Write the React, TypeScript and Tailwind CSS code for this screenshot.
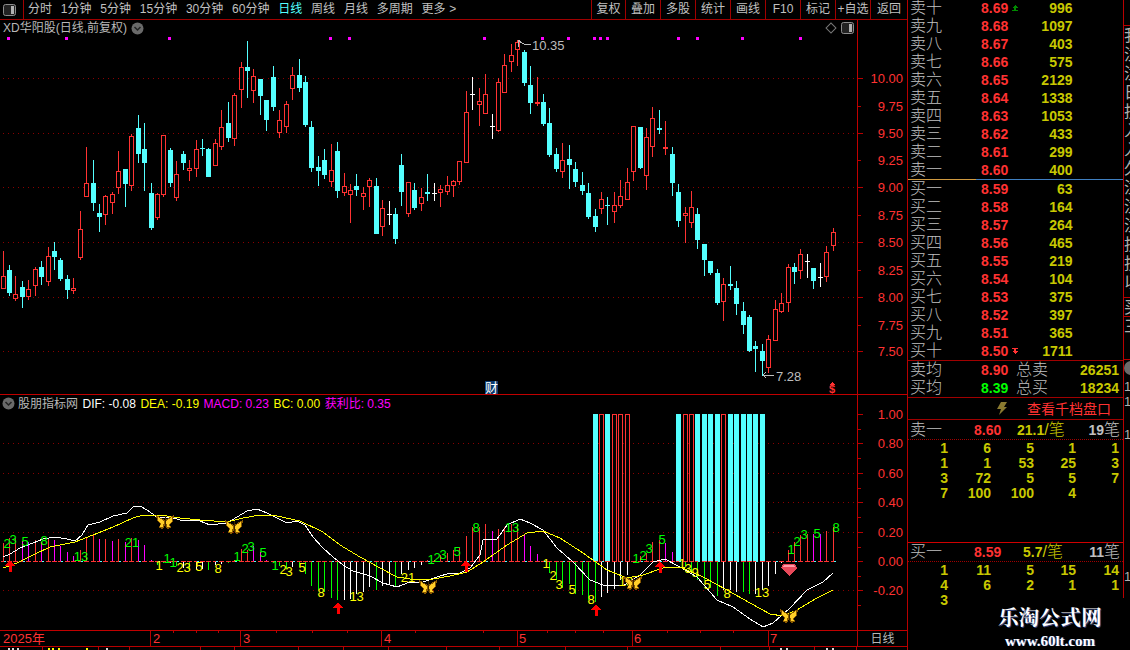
import React from "react";

type Kind = "r" | "c" | "w";
type Candle = [number, number, number, number, Kind];

const RED = "#ff3232";
const CYAN = "#54ffff";
const GRID = "#8a0000";
const LINE = "#b80000";

// high, body top, body bottom, low (screen y), colour
const candles: Candle[] = [
  [251, 276, 289, 289, "r"], [265, 270, 293, 296, "c"], [276, 294, 299, 301, "r"], [281, 287, 297, 308, "c"],
  [280, 289, 297, 300, "r"], [267, 269, 286, 296, "r"], [261, 267, 277, 285, "c"], [247, 256, 282, 286, "r"],
  [242, 251, 257, 270, "c"], [258, 260, 279, 281, "c"], [275, 279, 290, 299, "c"], [278, 288, 291, 294, "r"],
  [211, 229, 258, 260, "r"], [147, 183, 197, 197, "r"], [160, 183, 203, 211, "c"], [204, 213, 217, 232, "c"],
  [195, 196, 215, 225, "r"], [192, 194, 203, 214, "r"], [151, 171, 188, 194, "r"], [169, 169, 184, 207, "c"],
  [134, 136, 186, 191, "r"], [115, 128, 154, 163, "c"], [123, 149, 163, 191, "c"], [183, 193, 228, 230, "c"],
  [193, 194, 218, 220, "r"], [135, 135, 195, 197, "r"], [148, 150, 183, 187, "c"], [161, 174, 198, 201, "r"],
  [151, 154, 163, 170, "c"], [160, 168, 171, 181, "r"], [140, 149, 169, 177, "r"], [139, 148, 149, 156, "c"],
  [148, 149, 177, 177, "c"], [139, 143, 166, 166, "r"], [110, 127, 147, 150, "r"], [102, 123, 138, 142, "c"],
  [93, 95, 139, 146, "r"], [62, 67, 90, 108, "r"], [41, 67, 71, 98, "c"], [69, 76, 91, 103, "r"],
  [79, 79, 96, 115, "c"], [100, 100, 120, 131, "c"], [66, 77, 107, 111, "c"], [110, 120, 133, 138, "r"],
  [101, 104, 127, 133, "r"], [67, 75, 89, 100, "r"], [59, 75, 88, 92, "c"], [76, 82, 125, 127, "c"],
  [121, 127, 168, 172, "c"], [156, 167, 171, 186, "c"], [149, 160, 175, 179, "c"], [144, 170, 182, 187, "r"],
  [142, 151, 191, 198, "c"], [173, 186, 193, 196, "r"], [184, 190, 195, 223, "r"], [174, 186, 190, 196, "c"],
  [187, 193, 197, 210, "r"], [178, 180, 187, 207, "r"], [178, 186, 234, 234, "c"], [200, 208, 227, 236, "r"],
  [201, 214, 215, 225, "w"], [208, 214, 239, 244, "c"], [154, 165, 192, 206, "c"], [182, 182, 214, 217, "r"],
  [183, 190, 208, 210, "c"], [188, 197, 204, 211, "r"], [174, 192, 194, 201, "c"], [183, 193, 194, 201, "w"],
  [185, 189, 193, 207, "r"], [176, 185, 192, 195, "r"], [180, 181, 186, 197, "r"], [161, 161, 182, 185, "r"],
  [91, 112, 163, 163, "r"], [77, 94, 95, 110, "w"], [88, 101, 105, 126, "r"], [74, 94, 114, 114, "r"],
  [114, 126, 127, 139, "w"], [78, 82, 131, 132, "r"], [54, 65, 93, 93, "r"], [44, 55, 62, 72, "r"],
  [40, 42, 50, 66, "r"], [50, 52, 83, 86, "c"], [66, 85, 103, 114, "c"], [77, 102, 104, 106, "r"],
  [94, 102, 124, 126, "c"], [108, 123, 155, 157, "c"], [148, 154, 169, 172, "c"], [143, 160, 172, 178, "r"],
  [145, 159, 165, 189, "c"], [162, 169, 182, 187, "c"], [172, 185, 191, 195, "c"], [183, 193, 217, 219, "c"],
  [209, 216, 227, 232, "c"], [192, 199, 209, 214, "r"], [197, 205, 206, 225, "c"], [192, 205, 212, 223, "r"],
  [180, 196, 206, 208, "r"], [168, 182, 200, 200, "r"], [126, 126, 172, 181, "r"], [127, 127, 168, 169, "c"],
  [128, 137, 176, 190, "r"], [107, 118, 147, 157, "r"], [110, 128, 130, 134, "c"], [121, 147, 149, 155, "r"],
  [147, 154, 183, 196, "c"], [184, 192, 221, 227, "c"], [207, 213, 216, 243, "r"], [191, 207, 223, 228, "r"],
  [208, 214, 240, 249, "c"], [244, 244, 260, 276, "c"], [261, 261, 273, 275, "c"], [269, 273, 303, 305, "c"],
  [278, 284, 302, 321, "r"], [266, 284, 286, 290, "c"], [281, 288, 304, 315, "c"], [302, 311, 325, 334, "c"],
  [315, 317, 351, 352, "c"], [341, 346, 349, 372, "c"], [344, 351, 361, 376, "c"], [335, 339, 368, 373, "r"],
  [300, 309, 341, 341, "r"], [293, 303, 312, 313, "r"], [264, 267, 303, 312, "r"], [263, 267, 272, 284, "c"],
  [249, 254, 271, 279, "r"], [254, 261, 262, 278, "w"], [268, 268, 281, 289, "c"], [263, 277, 278, 287, "w"],
  [246, 252, 277, 282, "r"], [228, 232, 246, 251, "r"],
];

const BAR_COLORS: Record<string, string> = { r: RED, m: "#ff00ff", g: "#00ff00", w: "#ffffff" };

const bars: [number, string][] = [
  [543, "r"], [538, "r"], [538, "r"], [541, "m"], [542, "m"], [540, "r"], [542, "m"], [539, "r"], [540, "m"], [546, "m"],
  [552, "m"], [556, "m"], [550, "r"], [538, "r"], [535, "r"], [539, "m"], [539, "r"], [541, "m"], [539, "r"], [542, "m"],
  [538, "r"], [540, "m"], [545, "m"], [560, "m"], [565, "g"], [563, "g"], [563, "w"], [566, "g"], [568, "w"], [570, "g"],
  [570, "w"], [569, "w"], [570, "g"], [565, "w"], [564, "w"], [563, "g"], [560, "r"], [549, "r"], [550, "r"], [546, "m"],
  [552, "m"], [560, "m"], [563, "g"], [566, "g"], [569, "g"], [567, "w"], [567, "g"], [574, "g"], [586, "g"], [590, "g"],
  [592, "g"], [598, "g"], [600, "g"], [600, "w"], [599, "w"], [594, "w"], [592, "w"], [587, "w"], [590, "g"], [586, "w"],
  [584, "w"], [586, "g"], [574, "w"], [570, "w"], [568, "w"], [565, "w"], [560, "r"], [560, "r"], [555, "r"], [553, "r"],
  [550, "r"], [547, "r"], [536, "r"], [527, "r"], [527, "r"], [524, "r"], [531, "m"], [529, "r"], [527, "r"], [524, "r"],
  [525, "r"], [534, "m"], [546, "m"], [554, "m"], [561, "g"], [573, "g"], [580, "g"], [588, "g"], [584, "g"], [594, "g"],
  [595, "g"], [600, "g"], [602, "g"], [597, "w"], [593, "w"], [589, "w"], [580, "w"], [575, "w"], [563, "g"], [556, "r"],
  [553, "r"], [542, "r"], [540, "r"], [543, "m"], [552, "m"], [561, "g"], [567, "g"], [572, "g"], [580, "g"], [580, "g"],
  [588, "g"], [596, "g"], [590, "w"], [590, "w"], [592, "w"], [592, "g"], [594, "g"], [594, "w"], [590, "w"], [586, "w"],
  [574, "w"], [563, "w"], [550, "r"], [542, "r"], [535, "r"], [534, "r"], [534, "m"], [534, "m"], [531, "r"], [527, "r"],
];

// full height signal bars: candle index, solid or outlined
const signals: [number, boolean][] = [
  [92, true], [93, false], [94, true], [95, false], [96, false], [97, false],
  [105, true], [106, false], [107, false], [108, true], [109, true], [110, true], [111, true], [112, false],
  [113, true], [114, true], [115, true], [116, true], [117, true], [118, true],
];

const dif =
  "3,557 10,554 20,548 33,543 43,539 55,537 67,539 75,541 82,535 88,525 100,522 113,516 127,513 133,507 140,506 147,510 157,517 170,517 180,520 200,521 210,525 227,523 237,517 247,511 257,509 267,513 277,518 287,523 297,521 305,525 313,537 323,548 333,557 343,565 353,571 370,576 383,583 397,587 410,582 423,582 437,577 450,573 460,573 470,568 480,555 483,540 497,539 507,525 520,519 530,523 543,530 557,548 573,562 590,580 603,585 623,586 640,575 653,562 665,559 680,567 697,577 717,600 733,607 750,619 763,627 773,623 790,608 807,590 823,582 833,573";
const dea =
  "3,568 17,563 33,555 50,547 75,542 93,535 113,527 133,518 143,515 160,515 180,518 200,520 227,522 243,518 260,515 277,516 300,521 323,532 340,545 360,557 380,568 397,577 417,580 433,579 450,576 467,572 483,562 507,545 527,533 543,531 560,538 583,553 607,570 627,578 643,575 663,568 680,567 703,577 727,590 750,603 770,614 783,616 797,610 817,598 833,590";

// Fibonacci counters under the MACD: x, y, text, green or yellow
const counters: [number, number, string, boolean][] = [
  [7, 543, "2", true], [13, 539, "3", true], [25, 541, "5", true], [44, 540, "8", true], [81, 556, "13", true], [132, 542, "21", true],
  [159, 565, "1", false], [167, 558, "1", true], [173, 562, "1", true], [180, 567, "2", false], [187, 567, "3", false], [199, 566, "5", false], [218, 568, "8", false],
  [237, 556, "1", true], [245, 548, "2", true], [251, 546, "3", true], [263, 552, "5", true], [275, 565, "1", true], [283, 569, "2", false], [289, 571, "3", false], [302, 567, "5", false],
  [321, 592, "8", false], [353, 596, "1", false], [360, 596, "3", false], [408, 577, "21", false], [431, 559, "1", true], [437, 557, "2", true], [443, 554, "3", true],
  [457, 551, "5", true], [476, 527, "8", true], [512, 527, "13", true], [546, 563, "1", false], [553, 575, "2", false], [559, 584, "3", false], [572, 589, "5", false], [591, 599, "8", false], [626, 581, "13", false],
  [636, 558, "1", true], [643, 555, "2", true], [649, 548, "3", true], [662, 539, "5", true], [682, 563, "1", false], [688, 568, "3", false], [695, 572, "9", false], [707, 584, "5", false], [727, 593, "8", false], [762, 592, "13", false],
  [791, 549, "1", true], [797, 541, "2", true], [804, 534, "3", true], [817, 533, "5", true], [836, 527, "8", true],
];

const sellRows = [
  ["卖十", "8.69", "996"], ["卖九", "8.68", "1097"], ["卖八", "8.67", "403"], ["卖七", "8.66", "575"], ["卖六", "8.65", "2129"],
  ["卖五", "8.64", "1338"], ["卖四", "8.63", "1053"], ["卖三", "8.62", "433"], ["卖二", "8.61", "299"], ["卖一", "8.60", "400"],
];
const buyRows = [
  ["买一", "8.59", "63"], ["买二", "8.58", "164"], ["买三", "8.57", "264"], ["买四", "8.56", "465"], ["买五", "8.55", "219"],
  ["买六", "8.54", "104"], ["买七", "8.53", "375"], ["买八", "8.52", "397"], ["买九", "8.51", "365"], ["买十", "8.50", "1711"],
];
const sellQueue = [["1", "6", "5", "1", "1"], ["1", "1", "53", "25", "3"], ["3", "72", "5", "5", "7"], ["7", "100", "100", "4", ""]];
const buyQueue = [["1", "11", "5", "15", "14"], ["4", "6", "2", "1", "1"], ["3", "", "", "", ""]];

const leftTabs = ["分时", "1分钟", "5分钟", "15分钟", "30分钟", "60分钟", "日线", "周线", "月线", "多周期", "更多"];
const rightTabs = ["复权", "叠加", "多股", "统计", "画线", "F10", "标记", "+自选", "返回"];
const sliverChars = ["我", "注", "注", "日", "技", "入", "入", "久", "注", "注", "注", "技", "技", "以"];

const priceAxis: [number, string, boolean][] = [
  [78, "10.00", true], [106, "9.75", false], [133, "9.50", true], [160, "9.25", false], [187, "9.00", true], [215, "8.75", false],
  [242, "8.50", true], [270, "8.25", false], [297, "8.00", true], [325, "7.75", false], [351, "7.50", true],
];
const macdAxis: [number, string][] = [[414, "1.00"], [443, "0.80"], [473, "0.60"], [502, "0.40"], [532, "0.20"], [561, "0.00"], [590, "-0.20"]];

const px = (i: number) => Math.floor(3 + i * 6.435);

function CandleMark({ c, i }: { c: Candle; i: number }) {
  const x = px(i);
  const [hi, top, bot, lo, kind] = c;
  const color = kind === "r" ? RED : kind === "c" ? CYAN : "#ffffff";
  if (kind === "r") {
    return (
      <g>
        <rect x={x} y={hi} width={1} height={top - hi} fill={color} />
        <rect x={x} y={bot} width={1} height={lo - bot} fill={color} />
        <rect x={x - 1.5} y={top + 0.5} width={4} height={Math.max(bot - top - 1, 1)} fill="#000" stroke={color} />
      </g>
    );
  }
  return (
    <g>
      <rect x={x} y={hi} width={1} height={lo - hi} fill={color} />
      <rect x={x - 2} y={top} width={5} height={Math.max(bot - top, 1)} fill={color} />
    </g>
  );
}

function Butterfly({ x, y }: { x: number; y: number }) {
  return (
    <g>
      <polygon points={`${x},${y - 2} ${x - 9},${y - 7} ${x - 8},${y - 1} ${x - 5},${y + 2} ${x - 6},${y + 6} ${x - 2},${y + 7} ${x},${y + 3}`} fill="#8a5a00" />
      <polygon points={`${x},${y - 2} ${x + 9},${y - 7} ${x + 8},${y - 1} ${x + 5},${y + 2} ${x + 6},${y + 6} ${x + 2},${y + 7} ${x},${y + 3}`} fill="#8a5a00" />
      <polygon points={`${x - 1},${y - 1} ${x - 7},${y - 5} ${x - 7},${y - 1} ${x - 4},${y + 2} ${x - 5},${y + 5} ${x - 2},${y + 5}`} fill="#ffcf28" />
      <polygon points={`${x + 1},${y - 1} ${x + 7},${y - 5} ${x + 7},${y - 1} ${x + 4},${y + 2} ${x + 5},${y + 5} ${x + 2},${y + 5}`} fill="#ffcf28" />
      <rect x={x} y={y - 6} width={1} height={11} fill="#3a2400" />
    </g>
  );
}

function UpArrow({ x, y }: { x: number; y: number }) {
  return (
    <g fill="#ff0000">
      <polygon points={`${x},${y - 6} ${x + 5},${y} ${x - 5},${y}`} />
      <rect x={x - 1} y={y} width={3} height={6} />
    </g>
  );
}

function Chevron() {
  return (
    <svg width="13" height="13" viewBox="0 0 13 13" className="mr-[-1.5px] shrink-0">
      <circle cx="6.5" cy="6.5" r="6" fill="#6a6a6a" />
      <path d="M3.5 5 L6.5 8 L9.5 5" fill="none" stroke="#222" strokeWidth="1.5" />
    </svg>
  );
}

function PaneToggle() {
  return (
    <svg width="13" height="12" viewBox="0 0 13 12" className="shrink-0">
      <rect x="0.5" y="0.5" width="12" height="11" rx="2" fill="#222" stroke="#8c8c8c" />
      <rect x="8" y="2" width="3" height="8" fill="#b0b0b0" />
    </svg>
  );
}

function LimitMark({ up }: { up: boolean }) {
  return (
    <svg width="6" height="6" viewBox="0 0 6 6" shapeRendering="crispEdges">
      {up ? (
        <g fill="#008a00">
          <polygon points="3,0 6,3 0,3" />
          <rect x="0" y="5" width="6" height="1" />
          <rect x="2" y="3" width="2" height="2" />
        </g>
      ) : (
        <g fill="#ff3232">
          <rect x="0" y="0" width="6" height="1" />
          <rect x="2" y="1" width="2" height="2" />
          <polygon points="0,3 6,3 3,6" />
        </g>
      )}
    </svg>
  );
}

function PriceChart() {
  const dots = [8, 66, 169, 330, 349, 484, 542, 568, 594, 600, 607, 678, 697, 742, 800];
  return (
    <svg width="857" height="358" viewBox="0 36 857 358" shapeRendering="crispEdges" className="block">
      {[78, 133, 187, 242, 297, 351].map((y) => (
        <line key={y} x1={3} x2={857} y1={y + 0.5} y2={y + 0.5} stroke={GRID} strokeDasharray="1 4" />
      ))}
      {dots.map((x) => (
        <rect key={x} x={x - 1} y={37} width={3} height={3} fill="#ff00ff" />
      ))}
      {candles.map((c, i) => (
        <CandleMark key={i} c={c} i={i} />
      ))}
      <path d="M518 40 L518 47 M518 40 L522 43 L526 45 L531 44" fill="none" stroke="#bdbdbd" />
      <text x={532} y={50} fontSize={13} fill="#bdbdbd">10.35</text>
      <path d="M763 375 L774 375 M763 375 L766 372 M763 375 L766 378" fill="none" stroke="#bdbdbd" />
      <text x={776} y={381} fontSize={13} fill="#bdbdbd">7.28</text>
      <rect x={485} y={381} width={13} height={13} fill="#0b3a6e" />
      <text x={485} y={392} fontSize={13} fill="#fff">财</text>
      <polygon points="832,382 835,385 829,385" fill={RED} />
      <text x={832} y={393} fontSize={11} fontWeight="bold" fill={RED} textAnchor="middle">$</text>
    </svg>
  );
}

function MacdChart() {
  return (
    <svg width="857" height="218" viewBox="0 412 857 218" shapeRendering="crispEdges" className="block">
      {[443, 473, 502, 532, 590].map((y) => (
        <line key={y} x1={3} x2={857} y1={y + 0.5} y2={y + 0.5} stroke={GRID} strokeDasharray="1 4" />
      ))}
      {bars.map(([y, k], i) => {
        const x = px(i);
        return <rect key={i} x={x} y={Math.min(y, 561)} width={1} height={Math.abs(y - 561)} fill={BAR_COLORS[k]} />;
      })}
      {signals.map(([i, solid]) => {
        const x = px(i);
        return solid ? (
          <rect key={i} x={x - 2} y={414} width={5} height={147} fill={CYAN} />
        ) : (
          <rect key={i} x={x - 1.5} y={414.5} width={4} height={147} fill="#000" stroke={RED} />
        );
      })}
      {candles.map((_, i) => (
        <g key={i}>
          <rect x={px(i) - 2} y={561} width={3} height={1} fill={RED} />
          <rect x={px(i) + 1} y={561} width={2} height={1} fill={i % 3 === 0 ? CYAN : RED} />
        </g>
      ))}
      <polyline points={dif} fill="none" stroke="#ffffff" />
      <polyline points={dea} fill="none" stroke="#ffff00" />
      {counters.map(([x, y, t, green], i) => (
        <text key={i} x={x} y={y + 5} fontSize={13} textAnchor="middle" fill={green ? "#00ff00" : "#ffff00"}>{t}</text>
      ))}
      <Butterfly x={165} y={522} />
      <Butterfly x={234} y={527} />
      <Butterfly x={428} y={587} />
      <Butterfly x={633} y={583} />
      <Butterfly x={789} y={616} />
      <UpArrow x={10} y={566} />
      <UpArrow x={338} y={608} />
      <UpArrow x={466} y={566} />
      <UpArrow x={596} y={610} />
      <UpArrow x={660} y={567} />
      <polygon points="783,564 795,564 797,568 789,576 781,568" fill="#e8495a" />
      <polygon points="784,565 794,565 795,567 783,567" fill="#ff9aa6" />
    </svg>
  );
}

function DateAxis() {
  const minor = [173, 196, 218, 276, 312, 347, 415, 483, 547, 575, 603, 667, 700, 733];
  const major = [150, 240, 381, 517, 632, 768];
  const labels: [number, string][] = [[3, "2025年"], [153, "2"], [243, "3"], [384, "4"], [519, "5"], [634, "6"], [770, "7"]];
  return (
    <svg width="857" height="15" viewBox="0 631 857 15" shapeRendering="crispEdges" className="block">
      {minor.map((x) => (
        <rect key={x} x={x} y={631} width={1} height={2} fill={LINE} />
      ))}
      {major.map((x) => (
        <rect key={x} x={x} y={631} width={1} height={15} fill={LINE} />
      ))}
      {labels.map(([x, t]) => (
        <text key={x} x={x} y={643} fontSize={13} fill={RED}>{t}</text>
      ))}
    </svg>
  );
}

function BottomStrip() {
  const ticks = [42, 98, 129, 200, 234, 298, 343, 388, 446, 499, 565, 627, 720, 769, 814, 856];
  const bits: [number, string][] = [[8, "#ddd"], [12, "#ddd"], [17, "#ddd"], [48, "#ffff00"], [52, "#ffff00"], [58, "#ffff00"], [86, "#ffff00"], [106, "#ddd"], [780, "#ddd"], [786, "#ddd"], [826, "#ddd"], [832, "#ddd"]];
  return (
    <svg width="907" height="3" viewBox="0 647 907 3" shapeRendering="crispEdges" className="block">
      {ticks.map((x) => (
        <rect key={x} x={x} y={647} width={1} height={3} fill={LINE} />
      ))}
      {bits.map(([x, c]) => (
        <rect key={x} x={x} y={648} width={2} height={2} fill={c} />
      ))}
    </svg>
  );
}

function PriceAxis() {
  return (
    <svg width="49" height="374" viewBox="858 20 49 374" shapeRendering="crispEdges" className="block">
      {priceAxis.map(([y, t, long]) => (
        <g key={t}>
          <rect x={858} y={y} width={long ? 5 : 3} height={1} fill={LINE} />
          <text x={903} y={y + 5} fontSize={13} textAnchor="end" fill={RED}>{t}</text>
        </g>
      ))}
    </svg>
  );
}

function MacdAxis() {
  return (
    <svg width="49" height="235" viewBox="858 395 49 235" shapeRendering="crispEdges" className="block">
      {macdAxis.map(([y, t]) => (
        <g key={t}>
          <rect x={858} y={y} width={5} height={1} fill={LINE} />
          <rect x={858} y={y + 15} width={3} height={1} fill={LINE} />
          <text x={903} y={y + 5} fontSize={13} textAnchor="end" fill={RED}>{t}</text>
        </g>
      ))}
    </svg>
  );
}

function Toolbar() {
  return (
    <div className="flex h-[20px] border-b border-[#a00000] text-[12px] leading-[19px] text-[#c0c0c0]">
      <div className="flex w-[24px] items-center justify-center border-r border-[#a00000] pr-[4px]">
        <PaneToggle />
      </div>
      <div className="flex flex-1 gap-[8.8px] pl-[4px]">
        {leftTabs.map((t) => (
          <span key={t} className={t === "日线" ? "text-[#54ffff]" : ""}>{t}</span>
        ))}
        <span className="ml-[-5px]">&gt;</span>
      </div>
      <div className="flex">
        {rightTabs.map((t, i) => (
          <span
            key={t}
            className={
              i === 8
                ? "w-[37px] border-l border-[#a00000] text-center"
                : i === 0
                ? "w-[34px] border-l border-[#a00000] text-center"
                : "w-[35px] border-l border-[#a00000] text-center"
            }
          >
            {t}
          </span>
        ))}
      </div>
    </div>
  );
}

function Depth({ rows, up }: { rows: string[][]; up: boolean }) {
  return (
    <div className="flex flex-col">
      {rows.map(([label, price, qty], i) => (
        <div key={label} className="flex h-[18px] items-center">
          <span className="w-[73px] pl-[2px] text-[16px] font-light leading-none text-[#c0c0c0]">{label}</span>
          <span className="w-[30px] text-[14px] font-bold leading-none text-[#ff3232]">{price}</span>
          <span className="flex w-[8px] items-center justify-center">
            {up && i === 0 && <LimitMark up />}
            {!up && i === 9 && <LimitMark up={false} />}
          </span>
          <span className="w-[53.5px] text-right text-[14px] font-bold leading-none text-[#c8c800]">{qty}</span>
        </div>
      ))}
    </div>
  );
}

function Queue({ head, price, avg, total, cells }: { head: string; price: string; avg: string; total: string; cells: string[][] }) {
  return (
    <div className="flex flex-col">
      <div className="flex h-[20px] items-center border-b border-dotted border-[#a00000]">
        <span className="w-[66px] pl-[2px] text-[16px] font-light leading-none text-[#c0c0c0]">{head}</span>
        <span className="w-[43px] text-[14px] font-bold leading-none text-[#ff3232]">{price}</span>
        <span className="w-[46px] whitespace-nowrap text-right text-[14px] font-bold leading-none text-[#c8c800]">
          {avg}
          <span className="text-[16px] font-light">/笔</span>
        </span>
        <span className="w-[57px] text-right text-[14px] leading-none text-[#c0c0c0]">
          <span className="font-bold">{total}</span>
          <span className="text-[16px] font-light">笔</span>
        </span>
      </div>
      {cells.map((row, r) => (
        <div key={r} className="grid h-[15px] grid-cols-[40px_43px_43px_42px_43px] items-center pr-[4px] first:mt-px">
          {row.map((c, i) => (
            <span key={i} className="text-right text-[14px] font-bold leading-none text-[#c8c800]">{c}</span>
          ))}
        </div>
      ))}
    </div>
  );
}

function Totals() {
  const rows = [
    ["卖均", "8.90", "#ff3232", "总卖", "26251"],
    ["买均", "8.39", "#00ff00", "总买", "18234"],
  ];
  return (
    <div className="flex h-[38px] flex-col justify-center border-y border-[#a00000]">
      {rows.map(([a, p, color, b, v]) => (
        <div key={a} className="flex h-[18px] items-center">
          <span className="w-[73px] pl-[2px] text-[16px] font-light leading-none text-[#c0c0c0]">{a}</span>
          <span className="w-[35px] text-[14px] font-bold leading-none" style={{ color }}>{p}</span>
          <span className="w-[34px] text-[16px] font-light leading-none text-[#c0c0c0]">{b}</span>
          <span className="w-[69px] text-right text-[14px] font-bold leading-none text-[#c8c800]">{v}</span>
        </div>
      ))}
    </div>
  );
}

// neighbouring panel, cut off by the window edge
function Sliver() {
  return (
    <div className="flex w-[6px] shrink-0 flex-col overflow-hidden text-[16px] leading-[19px] text-[#b0b0b0]">
      <div className="h-[26px] shrink-0 border-b border-[#b80000]" />
      <div className="h-[272px] shrink-0 overflow-hidden border-b border-[#b80000]">
        {sliverChars.map((c, i) => (
          <span key={i} className="block h-[19px]">{c}</span>
        ))}
      </div>
      <div className="h-[19px] shrink-0 border-b border-[#b80000]">买</div>
      <div className="h-[43px] shrink-0 border-b border-[#b80000]">三</div>
      <div className="mt-[1px] h-[14px] w-[14px] shrink-0 rounded-full bg-[#6a6a6a]" />
      <span className="mt-[4px] shrink-0 text-[13px] leading-[15px]">1</span>
      <span className="shrink-0 text-[13px] leading-[15px]">1</span>
      <span className="mt-[18px] shrink-0 text-[13px] leading-[15px]">1</span>
      <span className="mt-[127px] shrink-0 text-[13px] leading-[15px]">1</span>
    </div>
  );
}

export default function App() {
  return (
    <div className="relative flex h-[650px] w-[1130px] overflow-hidden bg-black font-['Liberation_Sans','Noto_Sans_CJK_SC',sans-serif]">
      {/* charts */}
      <div className="flex w-[908px] shrink-0 flex-col border-r border-[#b80000]">
        <Toolbar />
        <div className="flex h-[375px] border-b border-[#c00000]">
          <div className="flex w-[857px] flex-col">
            <div className="flex h-[16px] items-center gap-[4px] pl-[3px] pr-[3px] text-[12px] text-[#b8b8b8]">
              <span>XD华阳股(日线,前复权)</span>
              <Chevron />
              <div className="ml-auto flex items-center gap-[6px]">
                <span className="h-[8px] w-[8px] rotate-45 border border-[#777]" />
                <PaneToggle />
              </div>
            </div>
            <PriceChart />
          </div>
          <div className="border-l border-[#c00000]">
            <PriceAxis />
          </div>
        </div>
        <div className="flex h-[236px] border-b border-[#c00000]">
          <div className="flex w-[857px] flex-col">
            <div className="flex h-[17px] items-center gap-[4.5px] pl-[2px] text-[12px] leading-none">
              <Chevron />
              <span className="text-[#b8b8b8]">股朋指标网</span>
              <span className="text-white">DIF: -0.08</span>
              <span className="text-[#ffff00]">DEA: -0.19</span>
              <span className="text-[#ff00ff]">MACD: 0.23</span>
              <span className="text-[#ffff00]">BC: 0.00</span>
              <span className="text-[#ff00ff]">获利比: 0.35</span>
            </div>
            <MacdChart />
          </div>
          <div className="border-l border-[#c00000]">
            <MacdAxis />
          </div>
        </div>
        <div className="flex h-[16px] border-b border-[#b80000]">
          <div className="w-[857px]">
            <DateAxis />
          </div>
          <div className="flex flex-1 items-center justify-center border-l border-[#b80000] text-[12px] leading-none text-[#b8b8b8]">日线</div>
        </div>
        <BottomStrip />
      </div>

      {/* order book */}
      <div className="flex h-[598px] w-[216px] shrink-0 flex-col border-r border-[#b80000]">
        <div className="-mt-px">
          <Depth rows={sellRows} up />
        </div>
        <div className="flex h-px shrink-0">
          <span className="w-[68px] bg-[#d09a40]" />
          <span className="flex-1 bg-[#3f7fc0]" />
        </div>
        <Depth rows={buyRows} up={false} />
        <Totals />
        <div className="flex h-[22px] shrink-0 items-center border-b border-[#a00000]">
          <svg width="12" height="13" viewBox="0 0 12 13" className="ml-[88px]">
            <path d="M5 0 L11 0 L8 5 L11 5 L3 13 L5 7 L1 7 Z" fill="#8a7a30" />
          </svg>
          <span className="ml-[19px] text-[14px] leading-none text-[#ff3232]">查看千档盘口</span>
        </div>
        <div className="h-[123px] shrink-0 border-b border-[#d00000]">
          <Queue head="卖一" price="8.60" avg="21.1" total="19" cells={sellQueue} />
        </div>
        <div className="-mt-px">
          <Queue head="买一" price="8.59" avg="5.7" total="11" cells={buyQueue} />
        </div>
      </div>

      <Sliver />

      {/* site watermark */}
      <div className="absolute left-[998px] top-[608px] flex flex-col items-center font-['Liberation_Serif','Noto_Serif_CJK_SC','Noto_Sans_CJK_SC',serif] font-bold leading-none text-white">
        <span className="text-[20.5px] tracking-[0.3px] [text-shadow:1px_1px_0_#304080]">乐淘公式网</span>
        <span className="mt-[5px] text-[15px] [text-shadow:1px_0_0_#304890]">www.60lt.com</span>
      </div>
    </div>
  );
}
